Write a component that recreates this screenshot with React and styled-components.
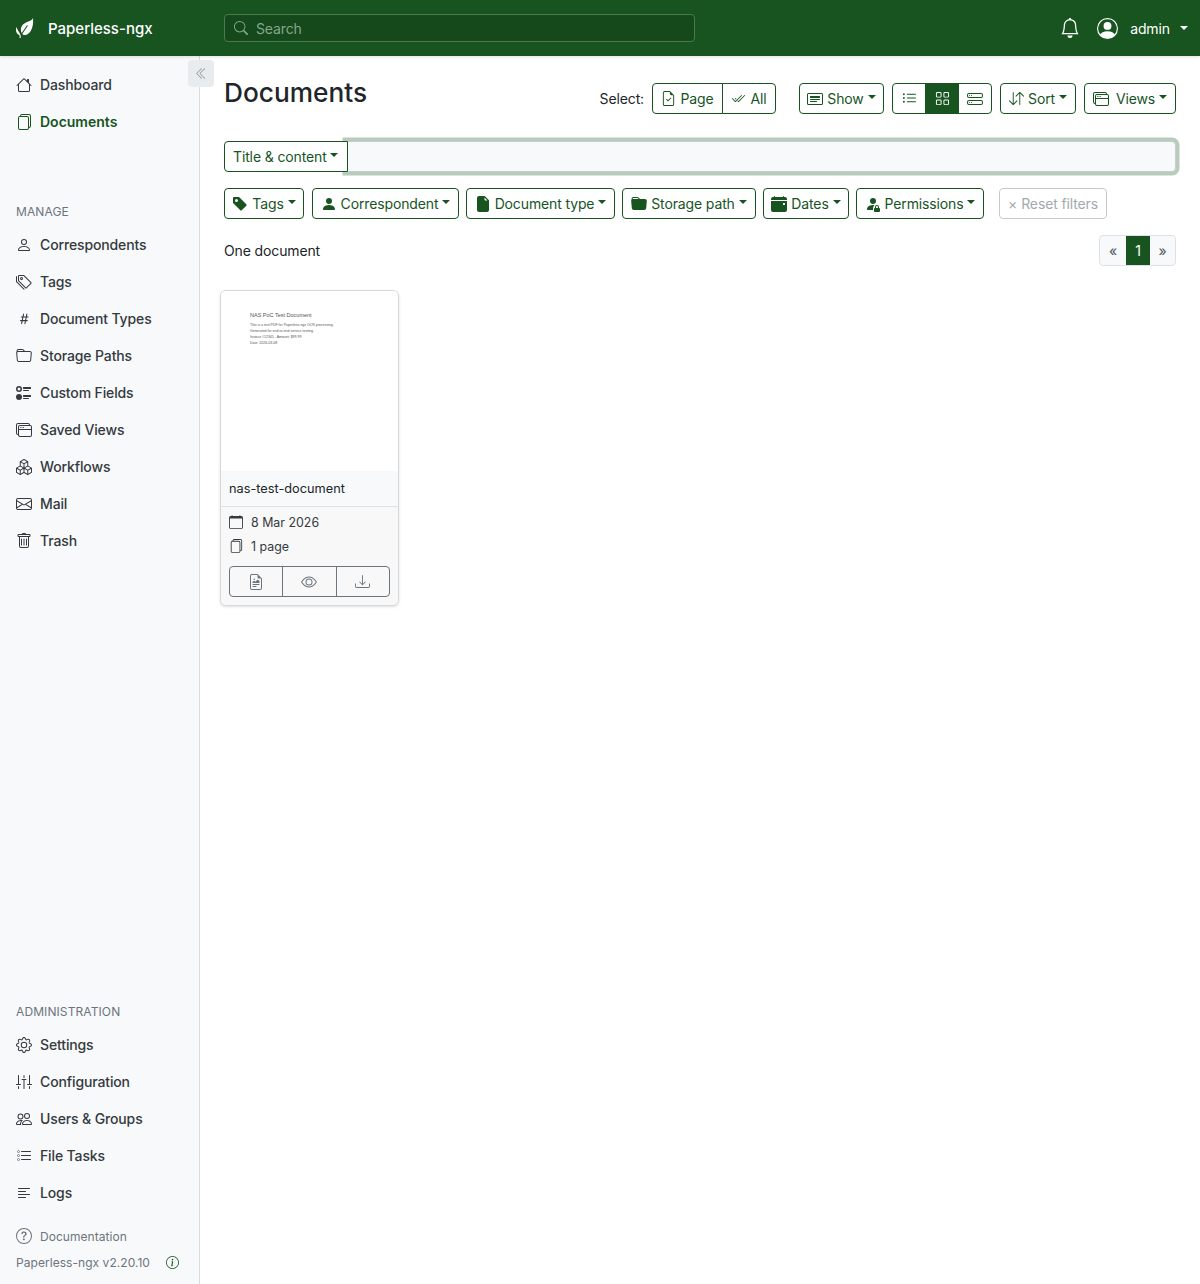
import React from "react";
import styled, { createGlobalStyle } from "styled-components";
import {
  BsHouse,
  BsFiles,
  BsPerson,
  BsTags,
  BsHash,
  BsFolder,
  BsUiRadios,
  BsWindowStack,
  BsBoxes,
  BsEnvelope,
  BsTrash,
  BsGear,
  BsSliders2Vertical,
  BsPeople,
  BsListTask,
  BsTextLeft,
  BsQuestionCircle,
  BsInfoCircle,
  BsBell,
  BsPersonCircle,
  BsSearch,
  BsChevronDoubleLeft,
  BsFileEarmarkCheck,
  BsCheck2All,
  BsCardHeading,
  BsListUl,
  BsGrid,
  BsHddStack,
  BsArrowDownUp,
  BsTagFill,
  BsPersonFill,
  BsFileEarmarkFill,
  BsFolderFill,
  BsCalendarEventFill,
  BsPersonFillLock,
  BsCalendar,
  BsFileEarmarkRichtext,
  BsEye,
  BsDownload,
} from "react-icons/bs";

const GREEN = "#17541f";

const GlobalStyle = createGlobalStyle`
  html, body {
    margin: 0;
    padding: 0;
    background: #fff;
  }
  body {
    font-family: Inter, "Liberation Sans", sans-serif;
    font-size: 14px;
    color: #212529;
  }
  * {
    box-sizing: border-box;
  }
`;

const Page = styled.div`
  width: 1200px;
  min-height: 1284px;
  display: flex;
  flex-direction: column;
`;

const Navbar = styled.header`
  height: 56px;
  background: ${GREEN};
  display: flex;
  align-items: center;
  color: #fff;
  position: relative;
  z-index: 2;
  box-shadow: 0 1px 3px rgba(0, 0, 0, 0.12);
`;

const Brand = styled.div`
  width: 224px;
  padding-left: 16px;
  display: flex;
  align-items: center;
  gap: 14px;
  font-size: 15px;
  font-weight: 500;
`;

const SearchBox = styled.div`
  width: 471px;
  height: 28px;
  display: flex;
  align-items: center;
  gap: 8px;
  padding-left: 9px;
  letter-spacing: -0.12px;
  background: #15491c;
  border: 1px solid #4b7a50;
  border-radius: 4px;
  color: #86a68a;
`;

const NavRight = styled.div`
  margin-left: auto;
  padding-right: 12px;
  display: flex;
  align-items: center;
  font-size: 14px;
  letter-spacing: -0.1px;
`;

const Body = styled.div`
  flex: 1;
  display: flex;
  position: relative;
`;

const Sidebar = styled.nav`
  width: 200px;
  flex: none;
  background: #f8f9fa;
  border-right: 1px solid #d9dbdd;
  display: flex;
  flex-direction: column;
  padding-top: 10px;
`;

const SectionLabel = styled.div`
  height: 21px;
  padding-left: 16px;
  font-size: 12px;
  line-height: 21px;
  letter-spacing: 0.1px;
  color: #6c757d;
  margin-top: ${(p) => p.$top || 0}px;
  margin-bottom: 4px;
`;

const NavItem = styled.a`
  height: 37px;
  display: flex;
  align-items: center;
  gap: 8px;
  padding-left: 16px;
  font-size: 14px;
  letter-spacing: ${(p) => (p.$active ? 0 : "-0.13px")};
  font-weight: ${(p) => (p.$active ? 600 : 500)};
  color: ${(p) => (p.$active ? GREEN : "#343a40")};
  svg {
    flex: none;
    color: ${(p) => (p.$active ? GREEN : "#343a40")};
  }
`;

const Spacer = styled.div`
  flex: 1;
`;

const SideFooter = styled.div`
  padding: 12px 0 9px 16px;
  font-size: 12px;
  color: #6c757d;
`;

const FooterRow = styled.div`
  display: flex;
  align-items: center;
  height: 26px;
  gap: ${(p) => p.$gap || 8}px;
  letter-spacing: 0.05px;
  svg {
    flex: none;
  }
`;

const Collapse = styled.button`
  position: absolute;
  left: 188px;
  top: 4px;
  width: 26px;
  height: 27px;
  padding: 0;
  border: 0;
  border-radius: 4px;
  background: #e9ecef;
  color: #979ea6;
  display: flex;
  align-items: center;
  justify-content: center;
`;

const Main = styled.main`
  flex: 1;
  padding: 27px 24px 0 24px;
  min-width: 0;
`;

const TitleRow = styled.div`
  display: flex;
  align-items: center;
  height: 31px;
`;

const Title = styled.h1`
  margin: -12px 0 0 0;
  font-size: 26.25px;
  font-weight: 500;
  line-height: 34px;
  color: #212529;
`;

const Tools = styled.div`
  margin-left: auto;
  display: flex;
  align-items: center;
  letter-spacing: -0.13px;
`;

const SelectLabel = styled.span`
  margin-right: 8px;
`;

const Btn = styled.button`
  height: 31px;
  padding: 0 8px;
  display: inline-flex;
  align-items: center;
  justify-content: center;
  gap: ${(p) => p.$gap ?? 5}px;
  width: ${(p) => (p.$w ? `${p.$w}px` : "auto")};
  margin-left: ${(p) => p.$ml || 0}px;
  font-family: inherit;
  font-size: 14px;
  letter-spacing: -0.13px;
  white-space: nowrap;
  color: ${GREEN};
  background: #fff;
  border: 1px solid ${GREEN};
  border-radius: 4px;
  svg {
    flex: none;
  }
`;

const Caret = styled.i`
  display: inline-block;
  margin-left: ${(p) => p.$ml ?? 0}px;
  margin-bottom: 3px;
  border-top: 4px solid currentColor;
  border-left: 4px solid transparent;
  border-right: 4px solid transparent;
`;

const Group = styled.div`
  display: flex;
  margin-left: ${(p) => p.$ml || 0}px;
  ${Btn} {
    border-radius: 0;
    margin-left: -1px;
  }
  ${Btn}:first-child {
    border-radius: 4px 0 0 4px;
    margin-left: 0;
  }
  ${Btn}:last-child {
    border-radius: 0 4px 4px 0;
  }
`;

const ViewBtn = styled(Btn)`
  background: ${(p) => (p.$on ? GREEN : "#fff")};
  color: ${(p) => (p.$on ? "#fff" : GREEN)};
  padding: 0;
`;

const SearchRow = styled.div`
  display: flex;
  margin-top: 27px;
  height: 31px;
`;

const ScopeBtn = styled(Btn)`
  width: 124px;
  border-radius: 4px 0 0 4px;
  justify-content: flex-start;
  gap: 3px;
  position: relative;
  z-index: 1;
`;

const TextSearch = styled.div`
  flex: 1;
  background: #f8f9fa;
  border: 1px solid #c5ccd3;
  border-radius: 0 4px 4px 0;
  box-shadow: 0 0 0 3.5px #b9ccbc;
  margin-left: -2px;
`;

const FilterRow = styled.div`
  display: flex;
  margin-top: 16px;
`;

const ResetBtn = styled(Btn)`
  color: #a3a9af;
  border-color: #c6cace;
  gap: 4px;
`;

const CountRow = styled.div`
  display: flex;
  align-items: center;
  justify-content: space-between;
  height: 31px;
  margin-top: 16px;
  letter-spacing: -0.13px;
`;

const Pager = styled.div`
  display: flex;
  height: 31px;
  border: 1px solid #dee2e6;
  border-radius: 4px;
  overflow: hidden;
  background: #f8f9fa;
`;

const PageCell = styled.div`
  width: ${(p) => p.$w}px;
  display: flex;
  align-items: center;
  justify-content: center;
  font-size: 14px;
  color: ${(p) => (p.$on ? "#fff" : "#495057")};
  background: ${(p) => (p.$on ? GREEN : "transparent")};
`;

const Card = styled.article`
  width: 179px;
  margin: 24px 0 0 -4px;
  background: #f8f9fa;
  border: 1px solid #d6d8da;
  border-radius: 6px;
  box-shadow: 0 1px 3px rgba(0, 0, 0, 0.13);
  overflow: hidden;
`;

const Thumb = styled.div`
  height: 180px;
  background: #fff;
  padding: 20px 0 0 29px;
  font-family: "Liberation Sans", sans-serif;
  color: #555;
`;

const ThumbTitle = styled.div`
  font-size: 5.5px;
  line-height: 8px;
  margin-bottom: 3px;
`;

const ThumbLine = styled.div`
  font-size: 3.5px;
  line-height: 6px;
  white-space: nowrap;
`;

const CardTitle = styled.div`
  height: 36px;
  padding-left: 8px;
  display: flex;
  align-items: center;
  font-size: 12.75px;
  color: #212529;
  border-bottom: 1px solid #dfe1e3;
`;

const CardBody = styled.div`
  padding: 3px 8px 8px;
  background: #f8f8f8;
`;

const Meta = styled.div`
  height: 24px;
  display: flex;
  align-items: center;
  gap: 8px;
  font-size: 12.4px;
  color: #343a40;
`;

const CardActions = styled.div`
  display: flex;
  height: 31px;
  margin-top: 8px;
  border: 1px solid #6c757d;
  border-radius: 4px;
`;

const CardAction = styled.div`
  flex: 1;
  display: flex;
  align-items: center;
  justify-content: center;
  color: #6c757d;
  & + & {
    border-left: 1px solid #6c757d;
  }
`;

function Leaf() {
  return (
    <svg width="18" height="20" viewBox="0 0 18 20" fill="#fff">
      <path d="M17 0c-.5 1.800-2.700 2.800-5.200 3.700C8 5 5.200 7.500 4.900 11.200c-.1 1.300.2 2.500.8 3.700.5 1.400 1.900 2.300 3.600 2.100C14.500 16.500 18 8.500 17 0z" />
      <path d="M3.200 19.500 11.500 7.500" fill="none" stroke={GREEN} strokeWidth="1.1" />
      <path d="M.5 9c-.8 2-.7 4.300.3 5.900.6 1 1.500 1.700 2.500 2 .3.700.4 1.300.3 3h1.100c.1-1.600 0-2.600-.5-3.600C3.300 14.400 1.400 12 .5 9z" />
    </svg>
  );
}

const mainNav = [
  { label: "Dashboard", icon: BsHouse },
  { label: "Documents", icon: BsFiles, active: true },
];
const manageNav = [
  { label: "Correspondents", icon: BsPerson },
  { label: "Tags", icon: BsTags },
  { label: "Document Types", icon: BsHash },
  { label: "Storage Paths", icon: BsFolder },
  { label: "Custom Fields", icon: BsUiRadios },
  { label: "Saved Views", icon: BsWindowStack },
  { label: "Workflows", icon: BsBoxes },
  { label: "Mail", icon: BsEnvelope },
  { label: "Trash", icon: BsTrash },
];
const adminNav = [
  { label: "Settings", icon: BsGear },
  { label: "Configuration", icon: BsSliders2Vertical },
  { label: "Users & Groups", icon: BsPeople },
  { label: "File Tasks", icon: BsListTask },
  { label: "Logs", icon: BsTextLeft },
];

function NavList({ items }) {
  return items.map(({ label, icon: Icon, active }) => (
    <NavItem key={label} $active={active}>
      <Icon size={16} />
      {label}
    </NavItem>
  ));
}

const filters = [
  { label: "Tags", icon: BsTagFill, w: 80 },
  { label: "Correspondent", icon: BsPersonFill, w: 147, ml: 8 },
  { label: "Document type", icon: BsFileEarmarkFill, w: 149, ml: 7 },
  { label: "Storage path", icon: BsFolderFill, w: 134, ml: 7 },
  { label: "Dates", icon: BsCalendarEventFill, w: 86, ml: 7 },
  { label: "Permissions", icon: BsPersonFillLock, w: 128, ml: 7 },
];

export default function App() {
  return (
    <Page>
      <GlobalStyle />
      <Navbar>
        <Brand>
          <Leaf />
          Paperless-ngx
        </Brand>
        <SearchBox>
          <BsSearch size={14} />
          Search
        </SearchBox>
        <NavRight>
          <BsBell size={20} />
          <BsPersonCircle size={21} style={{ marginLeft: 17 }} />
          <span style={{ marginLeft: 12 }}>admin</span>
          <Caret $ml={10} style={{ marginBottom: 0 }} />
        </NavRight>
      </Navbar>
      <Body>
        <Sidebar>
          <NavList items={mainNav} />
          <SectionLabel $top={61}>MANAGE</SectionLabel>
          <NavList items={manageNav} />
          <Spacer />
          <SectionLabel>ADMINISTRATION</SectionLabel>
          <NavList items={adminNav} />
          <SideFooter>
            <FooterRow>
              <BsQuestionCircle size={16} />
              Documentation
            </FooterRow>
            <FooterRow $gap={16}>
              Paperless-ngx v2.20.10
              <BsInfoCircle size={13} color={GREEN} />
            </FooterRow>
          </SideFooter>
        </Sidebar>
        <Collapse>
          <BsChevronDoubleLeft size={13} />
        </Collapse>
        <Main>
          <TitleRow>
            <Title>Documents</Title>
            <Tools>
              <SelectLabel>Select:</SelectLabel>
              <Group>
                <Btn $w={71} $gap={4}>
                  <BsFileEarmarkCheck size={15} />
                  Page
                </Btn>
                <Btn $w={54}>
                  <BsCheck2All size={14} />
                  All
                </Btn>
              </Group>
              <Btn $ml={23} $w={85} $gap={4}>
                <BsCardHeading size={16} />
                Show
                <Caret />
              </Btn>
              <Group $ml={8}>
                <ViewBtn $w={34}>
                  <BsListUl size={15} />
                </ViewBtn>
                <ViewBtn $w={34} $on>
                  <BsGrid size={15} />
                </ViewBtn>
                <ViewBtn $w={34}>
                  <BsHddStack size={16} />
                </ViewBtn>
              </Group>
              <Btn $ml={8} $w={76} $gap={4}>
                <BsArrowDownUp size={15} />
                Sort
                <Caret />
              </Btn>
              <Btn $ml={8} $w={92} $gap={7}>
                <BsWindowStack size={16} />
                Views
                <Caret $ml={-3} />
              </Btn>
            </Tools>
          </TitleRow>
          <SearchRow>
            <ScopeBtn>
              Title &amp; content
              <Caret />
            </ScopeBtn>
            <TextSearch />
          </SearchRow>
          <FilterRow>
            {filters.map(({ label, icon: Icon, w, ml }) => (
              <Btn key={label} $w={w} $ml={ml} $gap={4}>
                <Icon size={16} />
                {label}
                <Caret />
              </Btn>
            ))}
            <ResetBtn $ml={15} $w={108}>
              <span>×</span>
              Reset filters
            </ResetBtn>
          </FilterRow>
          <CountRow>
            One document
            <Pager>
              <PageCell $w={26}>«</PageCell>
              <PageCell $w={24} $on>
                1
              </PageCell>
              <PageCell $w={25}>»</PageCell>
            </Pager>
          </CountRow>
          <Card>
            <Thumb>
              <ThumbTitle>NAS PoC Test Document</ThumbTitle>
              <ThumbLine>This is a test PDF for Paperless-ngx OCR processing.</ThumbLine>
              <ThumbLine>Generated for end-to-end service testing.</ThumbLine>
              <ThumbLine>Invoice #12345 - Amount: $99.99</ThumbLine>
              <ThumbLine>Date: 2026-03-08</ThumbLine>
            </Thumb>
            <CardTitle>nas-test-document</CardTitle>
            <CardBody>
              <Meta>
                <BsCalendar size={14} />
                8 Mar 2026
              </Meta>
              <Meta>
                <BsFiles size={14} />
                1 page
              </Meta>
              <CardActions>
                <CardAction>
                  <BsFileEarmarkRichtext size={16} />
                </CardAction>
                <CardAction>
                  <BsEye size={16} />
                </CardAction>
                <CardAction>
                  <BsDownload size={15} />
                </CardAction>
              </CardActions>
            </CardBody>
          </Card>
        </Main>
      </Body>
    </Page>
  );
}
